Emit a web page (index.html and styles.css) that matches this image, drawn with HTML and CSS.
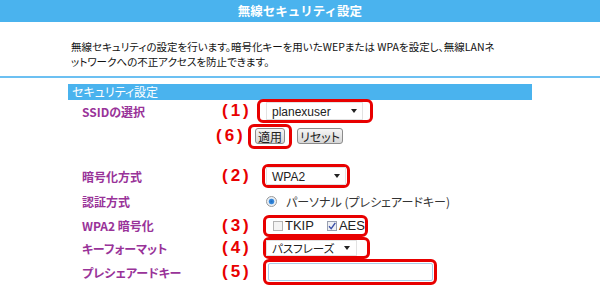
FILE: index.html
```html
<!DOCTYPE html>
<html lang="ja">
<head>
    <meta charset="UTF-8">
    <title>無線セキュリティ設定</title>
    <link rel="stylesheet" href="styles.css">
</head>
<body>

    <header class="page-header">
        <h1>無線セキュリティ設定</h1>
    </header>

    <p class="intro">無線セキュリティの設定を行います。暗号化キーを用いたWEPまたは WPAを設定し、無線LANネ<br>ットワークへの不正アクセスを防止できます。</p>

    <div class="divider"></div>

    <div class="section">
        <div class="section-title">セキュリティ設定</div>

        <!-- SSID -->
        <div class="row row-ssid">
            <div class="label">SSIDの選択</div>
            <div class="mark">(1)</div>
            <div class="callout callout-ssid">
                <div class="select select-ssid"><span class="latin">planexuser</span><span class="caret"></span></div>
            </div>
        </div>

        <div class="row row-apply">
            <div class="label"></div>
            <div class="mark mark-apply">(6)</div>
            <div class="callout callout-apply">
                <button class="btn btn-apply">適用</button>
            </div>
            <button class="btn btn-reset">リセット</button>
        </div>

        <!-- encryption -->
        <div class="row row-crypt">
            <div class="label">暗号化方式</div>
            <div class="mark">(2)</div>
            <div class="callout callout-crypt">
                <div class="select select-crypt"><span class="latin">WPA2</span><span class="caret"></span></div>
            </div>
        </div>

        <div class="row row-auth">
            <div class="label">認証方式</div>
            <div class="mark"></div>
            <span class="radio"></span>
            <span class="auth-text">パーソナル (プレシェアードキー)</span>
        </div>

        <div class="row row-cipher">
            <div class="label">WPA2 暗号化</div>
            <div class="mark">(3)</div>
            <div class="callout callout-cipher">
                <span class="check"></span><span class="latin check-text">TKIP</span>
                <span class="check check-on">
                    <svg width="10" height="10" viewBox="0 0 10 10"><path d="M2 5.2 L4.2 7.6 L8.3 1.8" fill="none" stroke="#3a4fa8" stroke-width="1.4"/></svg>
                </span><span class="latin check-text">AES</span>
            </div>
        </div>

        <div class="row row-format">
            <div class="label">キーフォーマット</div>
            <div class="mark">(4)</div>
            <div class="callout callout-format">
                <div class="select select-format"><span>パスフレーズ</span><span class="caret"></span></div>
            </div>
        </div>

        <div class="row row-key">
            <div class="label">プレシェアードキー</div>
            <div class="mark">(5)</div>
            <div class="callout callout-key">
                <input class="key-input" type="text">
            </div>
        </div>
    </div>

</body>
</html>
```

FILE: styles.css
```css
body {
    margin: 0;
    padding: 0;
    background-color: #fff;
    font-family: "Noto Sans CJK JP", "Liberation Sans", sans-serif;
    color: #111;
}
.page-header {
    height: 22px;
    background-color: #4ab3ee;
}
.page-header h1 {
    margin: 0;
    font-size: 12.5px;
    line-height: 22px;
    color: #fff;
    text-align: center;
    font-weight: bold;
}
.intro {
    margin: 17px 0 0 71px;
    font-size: 10.5px;
    line-height: 15px;
    font-feature-settings: "palt";
}
.divider {
    margin-top: 7px;
    height: 2px;
    background-color: #6cc0f2;
}
.section {
    margin: 6px 0 0 68px;
    width: 464px;
}
.section-title {
    height: 16px;
    padding-left: 4px;
    background-color: #4ab3ee;
    color: #fff;
    font-size: 12px;
    line-height: 16px;
    font-feature-settings: "palt";
}
.row {
    display: flex;
    align-items: center;
    padding-left: 14px;
}
.label {
    width: 136px;
    flex-shrink: 0;
    color: #993399;
    font-size: 12px;
    font-weight: bold;
    font-feature-settings: "palt";
}
.mark {
    width: 39px;
    flex-shrink: 0;
    box-sizing: border-box;
    padding-left: 4px;
    color: #e80000;
    font-family: "Liberation Sans", sans-serif;
    font-size: 17px;
    font-weight: bold;
    letter-spacing: 3px;
}
.mark-apply {
    width: 32px;
    padding-left: 0;
    margin-left: -2px;
}
.latin {
    font-family: "Liberation Sans", sans-serif;
}
.callout {
    display: flex;
    align-items: center;
    box-sizing: border-box;
    border: 3px solid #e80000;
    border-radius: 6px;
    background-color: #fff;
}

/* rows */
.row-ssid { height: 24px; margin-top: -1px; }
.row-apply { height: 26px; }
.row-crypt { height: 24px; margin-top: 15px; }
.row-auth { height: 26px; }
.row-cipher { height: 23px; }
.row-format { height: 22px; }
.row-key { height: 26px; }

.callout-ssid { width: 116px; height: 24px; padding-left: 6px; }
.callout-apply { width: 44px; height: 25px; padding-left: 4px; }
.callout-crypt { width: 88px; height: 24px; margin-left: 5px; padding-left: 1px; }
.callout-cipher { width: 105px; height: 22px; margin-left: 6px; padding-left: 7px; }
.callout-format { width: 107px; height: 22px; margin-left: 6px; padding-left: 0; }
.callout-key { width: 174px; height: 26px; margin-left: 6px; padding-left: 2px; }

/* fake select */
.select {
    position: relative;
    box-sizing: border-box;
    height: 18px;
    padding-left: 5px;
    border: 1px solid #e2e2e2;
    background-color: #fff;
    font-size: 12px;
    line-height: 16px;
    color: #222;
}
.select-ssid { width: 97px; }
.select-crypt { width: 80px; }
.select-format {
    width: 91px;
    height: 16px;
    line-height: 14px;
    font-size: 11.5px;
    font-feature-settings: "palt";
}
.caret {
    position: absolute;
    right: 5px;
    top: 6px;
    width: 0;
    height: 0;
    border-left: 3.5px solid transparent;
    border-right: 3.5px solid transparent;
    border-top: 4px solid #222;
}
.select-format .caret { top: 5px; right: 6px; }

.btn {
    height: 16px;
    padding: 0;
    border: 1px solid #8c8c8c;
    border-radius: 3px;
    background: linear-gradient(#f6f6f6, #d6d6d6);
    font-family: "Noto Sans CJK JP", sans-serif;
    font-size: 12px;
    line-height: 13px;
    color: #222;
    font-feature-settings: "palt";
}
.btn-apply { width: 30px; }
.btn-reset { width: 46px; margin-left: 5px; }

.radio {
    box-sizing: border-box;
    width: 11px;
    height: 11px;
    margin-left: 9px;
    border: 1px solid #9a9a9a;
    border-radius: 50%;
    background: radial-gradient(circle, #1f6fc4 0, #3d8ee0 2.5px, #e8eef4 3.2px, #f2f2f2 100%);
}
.auth-text {
    margin-left: 9px;
    font-size: 12px;
    color: #333;
    font-feature-settings: "palt";
}

.check {
    display: inline-block;
    box-sizing: border-box;
    width: 10px;
    height: 10px;
    border: 1px solid #b4b4b4;
    background-color: #f4f4f4;
}
.check svg {
    display: block;
    margin: -1px;
}
.check-text {
    margin-left: 2px;
    font-size: 13px;
    color: #222;
}
.check-on {
    margin-left: 13px;
    border-color: #9aa0b0;
    background-color: #eef0f4;
}

.key-input {
    box-sizing: border-box;
    width: 165px;
    height: 18px;
    margin: 0;
    border: 1px solid #a8cde8;
    border-radius: 2px;
    background-color: #fff;
}
```
